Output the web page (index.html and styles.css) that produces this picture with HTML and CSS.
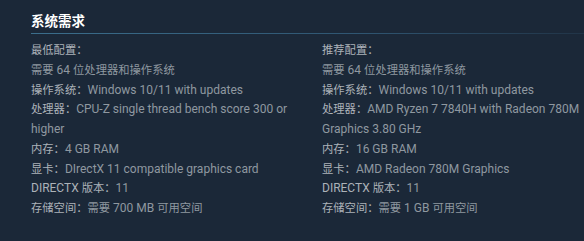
FILE: index.html
```html
<!DOCTYPE html>
<html lang="zh-CN">
<head>
<meta charset="utf-8">
<link rel="stylesheet" href="styles.css">
</head>
<body>
<div class="sysreq">
  <h2 class="title">系统需求</h2>
  <div class="cols">
    <ul class="col">
      <li><span class="lbl zh">最低配置：</span></li>
      <li><span class="zh">需要</span> 64 <span class="zh">位处理器和操作系统</span></li>
      <li><span class="lbl zh">操作系统：</span>Windows 10/11 with updates</li>
      <li><span class="lbl zh">处理器：</span>CPU-Z single thread bench score 300 or higher</li>
      <li><span class="lbl zh">内存：</span>4 GB RAM</li>
      <li><span class="lbl zh">显卡：</span>DIrectX 11 compatible graphics card</li>
      <li><span class="lbl">DIRECTX <span class="zh">版本：</span></span>11</li>
      <li><span class="lbl zh">存储空间：</span><span class="zh">需要</span> 700 MB <span class="zh">可用空间</span></li>
    </ul>
    <ul class="col">
      <li><span class="lbl zh">推荐配置：</span></li>
      <li><span class="zh">需要</span> 64 <span class="zh">位处理器和操作系统</span></li>
      <li><span class="lbl zh">操作系统：</span>Windows 10/11 with updates</li>
      <li><span class="lbl zh">处理器：</span>AMD Ryzen 7 7840H with Radeon 780M Graphics 3.80 GHz</li>
      <li><span class="lbl zh">内存：</span>16 GB RAM</li>
      <li><span class="lbl zh">显卡：</span>AMD Radeon 780M Graphics</li>
      <li><span class="lbl">DIRECTX <span class="zh">版本：</span></span>11</li>
      <li><span class="lbl zh">存储空间：</span><span class="zh">需要</span> 1 GB <span class="zh">可用空间</span></li>
    </ul>
  </div>
</div>
</body>
</html>
```
FILE: styles.css
```css
html, body {
  margin: 0;
  padding: 0;
  background: #1b2838;
}
body {
  width: 584px;
  height: 241px;
  overflow: hidden;
  font-family: Roboto, "Noto Sans CJK SC", sans-serif;
}
.sysreq {
  padding: 10px 0 0 31px;
}
.title {
  margin: 0;
  font-family: "Noto Sans CJK SC", sans-serif;
  font-size: 13.5px;
  line-height: 20px;
  font-weight: 700;
  color: #ffffff;
  padding-bottom: 3px;
  border-bottom: 1px solid transparent;
  border-image: linear-gradient(to right, #3b6e8c 0%, #2f5571 60%, #213447 100%) 1;
}
.cols {
  display: grid;
  grid-template-columns: 291px 291px;
  padding-top: 7px;
}
.col {
  list-style: none;
  margin: 0;
  padding: 0;
  font-size: 12px;
  line-height: 19.75px;
  color: #8f98a0;
}
.col li {
  padding-right: 10px;
}
.zh {
  font-family: "Noto Sans CJK SC", sans-serif;
  font-size: 11.3px;
  line-height: 1;
}
.lbl {
  color: #acb2b8;
}
```
